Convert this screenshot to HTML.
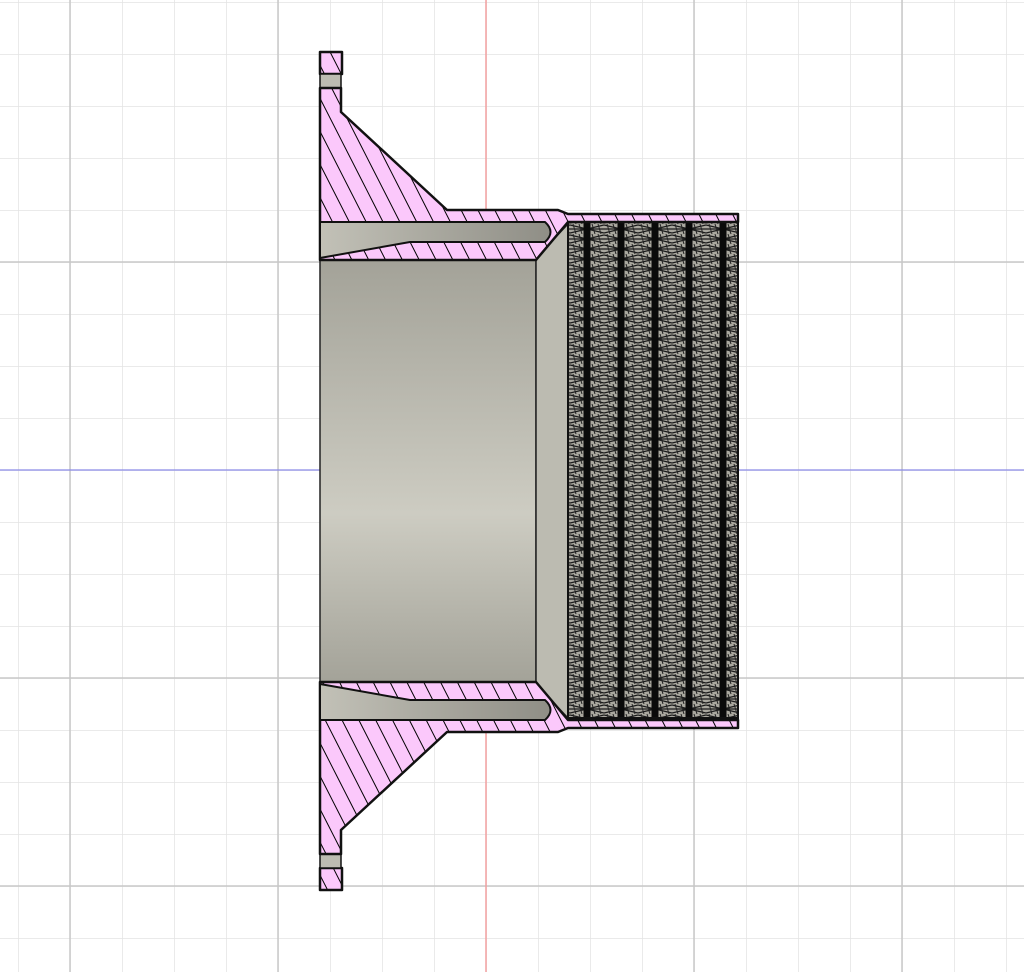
<!DOCTYPE html>
<html><head><style>html,body{margin:0;padding:0;background:#fff}svg{display:block}</style></head>
<body>
<svg width="1024" height="972" viewBox="0 0 1024 972" xmlns="http://www.w3.org/2000/svg">
<defs>
<pattern id="gm" width="52" height="52" patternUnits="userSpaceOnUse" x="18" y="54">
<path d="M0 0V52M0 0H52" stroke="#e3e3e3" stroke-width="1.5" fill="none"/>
</pattern>
<pattern id="h1" width="15" height="15" patternUnits="userSpaceOnUse" patternTransform="rotate(-27)">
<rect width="15" height="15" fill="#fbc8fb"/><path d="M0 0V15" stroke="#000" stroke-width="2"/>
</pattern>
<pattern id="h2" width="15" height="15" patternUnits="userSpaceOnUse" patternTransform="rotate(27)">
<rect width="15" height="15" fill="#fbc8fb"/><path d="M0 0V15" stroke="#000" stroke-width="2"/>
</pattern>
<linearGradient id="bore" x1="0" y1="0" x2="0" y2="1">
<stop offset="0" stop-color="#a3a298"/><stop offset="0.6" stop-color="#cdccc2"/><stop offset="1" stop-color="#a3a298"/>
</linearGradient>
<linearGradient id="slot" x1="0" y1="0" x2="1" y2="0">
<stop offset="0" stop-color="#c2c1b7"/><stop offset="1" stop-color="#8f8e86"/>
</linearGradient>
<pattern id="mesh" width="34" height="10" patternUnits="userSpaceOnUse" x="570" y="224">
<rect width="34" height="10" fill="#a9a79e"/>
<path d="M0 1L34 9M0 9L34 1M0 5H34" stroke="#1a1a1a" stroke-width="1.3" fill="none"/>
<path d="M3 0L6 10M9 0L12 10M22 0L25 10M28 0L31 10" stroke="#222" stroke-width="1"/>
<path d="M17 0V10" stroke="#0a0a0a" stroke-width="7"/>
</pattern>
</defs>
<rect width="1024" height="972" fill="#fff"/>
<rect width="1024" height="972" fill="url(#gm)"/>
<g stroke="#c8c8c8" stroke-width="1.5">
<path d="M70 0V972M278 0V972M694 0V972M902 0V972M0 262H1024M0 678H1024M0 886H1024"/>
</g>
<path d="M486 0V972" stroke="#f2a0a0" stroke-width="1.5"/>
<path d="M0 470H1024" stroke="#8a8ae8" stroke-width="1.2"/>

<rect x="320" y="258" width="216" height="426" fill="url(#bore)" stroke="#222" stroke-width="1.5"/>
<polygon points="536,258 568,224 568,718 536,684" fill="#bcbbb1" stroke="#222" stroke-width="1.5"/>
<rect x="568" y="222" width="170" height="496" fill="url(#mesh)" stroke="#111" stroke-width="2"/>

<g stroke="#111" stroke-width="2.5" stroke-linejoin="round">
<rect x="320" y="52" width="22" height="22" fill="url(#h1)"/>
<rect x="320" y="74" width="21" height="14" fill="#bdbcb2" stroke-width="1.5"/>
<path d="M320 88H341V112L447 210H558L568 214H738V222H568L536 260H320Z" fill="url(#h1)"/>
<path d="M320 222H545Q556 232 545 242H410L320 258Z" fill="url(#slot)" stroke-width="2"/>
</g>
<g transform="translate(0,942) scale(1,-1)" stroke="#111" stroke-width="2.5" stroke-linejoin="round">
<rect x="320" y="52" width="22" height="22" fill="url(#h2)"/>
<rect x="320" y="74" width="21" height="14" fill="#bdbcb2" stroke-width="1.5"/>
<path d="M320 88H341V112L447 210H558L568 214H738V222H568L536 260H320Z" fill="url(#h2)"/>
<path d="M320 222H545Q556 232 545 242H410L320 258Z" fill="url(#slot)" stroke-width="2"/>
</g>
</svg>
</body></html>
